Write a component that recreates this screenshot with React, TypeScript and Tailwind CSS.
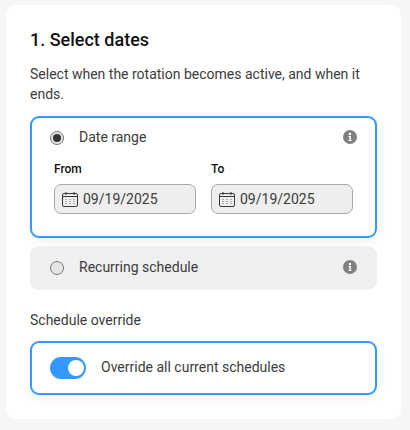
function CalendarIcon() {
  return (
    <svg width="16" height="15" viewBox="0 0 16 15" fill="none" className="shrink-0 text-[#3a3a3a]">
      <rect x="0.5" y="1.5" width="15" height="13" rx="1.5" stroke="currentColor" />
      <path d="M1 4.5h14" stroke="currentColor" />
      <path d="M4 0v3M12 0v3" stroke="currentColor" />
      <path d="M3 7.5h2M7 7.5h2M11 7.5h2M3 9.5h2M7 9.5h2M11 9.5h2M3 11.5h2M7 11.5h2M11 11.5h2" stroke="currentColor" strokeWidth="0.8" opacity="0.45" />
    </svg>
  )
}

function InfoIcon() {
  return (
    <svg width="14" height="14" viewBox="0 0 14 14" className="shrink-0">
      <circle cx="7" cy="7" r="7" fill="#808080" />
      <circle cx="7" cy="3.9" r="1.25" fill="#fff" />
      <path d="M5.6 6h2.3v3.9h0.7v1.1H5.5V9.9h0.9V7.1h-0.8z" fill="#fff" />
    </svg>
  )
}

function DateField({ label }: { label: string }) {
  return (
    <div className="w-[142px]">
      <div className="mb-[8px] text-[12px] leading-[14px] font-medium text-[#111]">{label}</div>
      <div className="flex h-[30px] items-center gap-[5px] rounded-[7px] border border-[#a9a9a9] bg-[#eeeeee] pl-[7px] text-[14px] text-[#3c3c3c]">
        <CalendarIcon />
        <span>09/19/2025</span>
      </div>
    </div>
  )
}

export default function App() {
  return (
    <div className="h-[430px] w-[410px] bg-[#f6f6f6] pt-[5px] pl-[6px] font-['Roboto',sans-serif]">
      <div className="h-[414px] w-[395px] rounded-[10px] bg-white pt-[23px] pl-[24px]">
        <h2 className="text-[18px] leading-[24px] font-medium text-[#111]">1. Select dates</h2>
        <p className="mt-[12px] w-[340px] text-[14px] leading-[20px] text-[#3c3c3c]">
          Select when the rotation becomes active, and when it ends.
        </p>

        <div className="mt-[12px] h-[122px] w-[347px] rounded-[9px] border-2 border-[#3399ff] bg-white px-[18px] pt-[9px] shadow-[0_4px_12px_rgba(0,0,0,0.06)]">
          <div className="flex h-[20px] items-center">
            <span className="mt-[2px] flex h-[14px] w-[14px] items-center justify-center rounded-full border-[1.5px] border-[#777] bg-[#e4e4e4]">
              <span className="h-[8px] w-[8px] rounded-full bg-[#333]" />
            </span>
            <span className="ml-[15px] text-[14px] text-[#3c3c3c]">Date range</span>
            <span className="ml-auto flex">
              <InfoIcon />
            </span>
          </div>
          <div className="mt-[15px] flex gap-[15px] pl-[4px]">
            <DateField label="From" />
            <DateField label="To" />
          </div>
        </div>

        <div className="mt-[8px] flex h-[44px] w-[347px] items-center rounded-[9px] bg-[#f0f0f0] px-[20px]">
          <span className="h-[14px] w-[14px] rounded-full border-[1.5px] border-[#777] bg-[#e4e4e4]" />
          <span className="ml-[15px] pb-[2px] text-[14px] text-[#3c3c3c]">Recurring schedule</span>
          <span className="ml-auto flex pb-[2px]">
            <InfoIcon />
          </span>
        </div>

        <div className="mt-[20px] text-[14px] leading-[20px] text-[#3c3c3c]">Schedule override</div>

        <div className="mt-[11px] flex h-[54px] w-[347px] items-center rounded-[9px] border-2 border-[#3399ff] bg-white pl-[18px] shadow-[0_4px_12px_rgba(0,0,0,0.06)]">
          <span className="flex h-[22px] w-[36px] items-center justify-end rounded-full bg-[#3399ff] pr-[2px]">
            <span className="h-[16px] w-[16px] rounded-full bg-white" />
          </span>
          <span className="ml-[15px] pb-[2px] text-[14px] text-[#3c3c3c]">Override all current schedules</span>
        </div>
      </div>
    </div>
  )
}
